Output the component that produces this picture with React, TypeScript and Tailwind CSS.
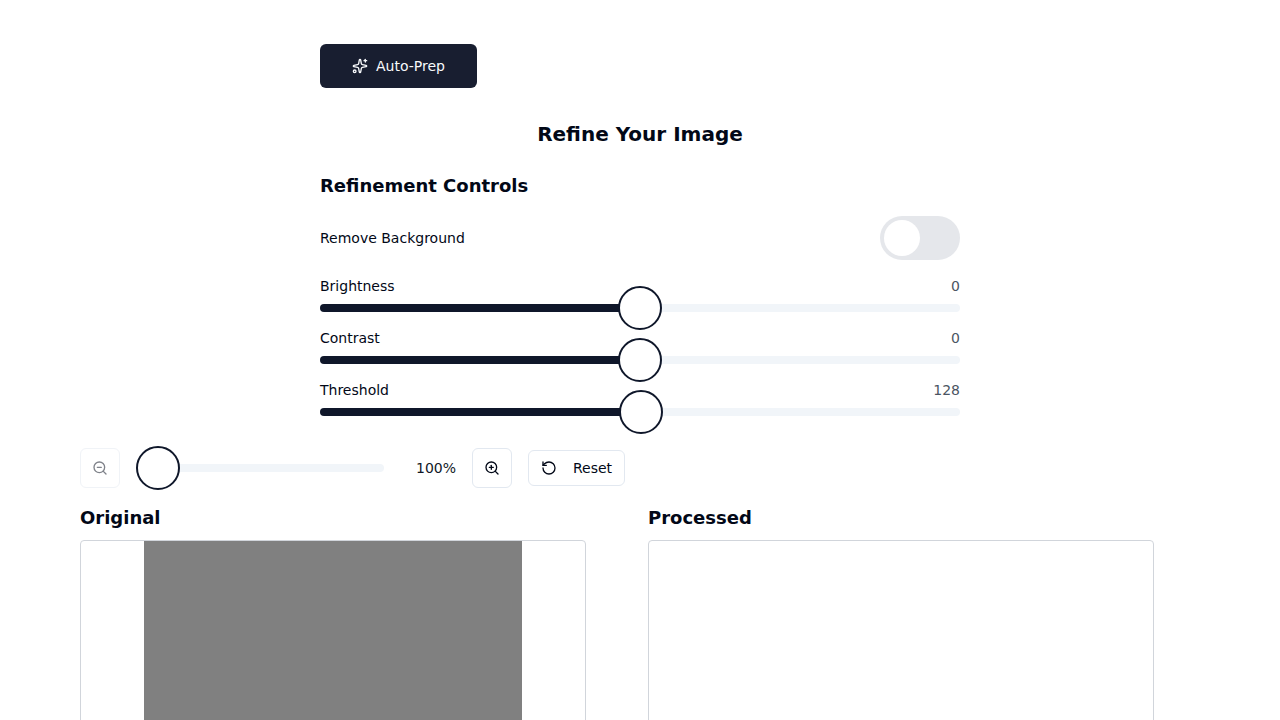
import { RotateCcw, Sparkles, ZoomIn, ZoomOut } from "lucide-react";

function Thumb({ left }: { left: number }) {
  return (
    <span
      className="absolute top-1/2 size-11 -translate-y-1/2 rounded-full border-2 border-[#0f172a] bg-white"
      style={{ left }}
    />
  );
}

function Track({ fill, thumb }: { fill: number; thumb: number }) {
  return (
    <div className="relative w-full">
      <div className="h-2 w-full overflow-hidden rounded-full bg-[#f1f5f9]">
        <div className="h-full bg-[#0f172a]" style={{ width: fill }} />
      </div>
      <Thumb left={thumb} />
    </div>
  );
}

const controls = [
  { label: "Brightness", value: "0", fill: 320, thumb: 298 },
  { label: "Contrast", value: "0", fill: 320, thumb: 298 },
  { label: "Threshold", value: "128", fill: 321.25, thumb: 299.17 },
];

export default function App() {
  return (
    <div className="h-[720px] overflow-hidden bg-white font-['DejaVu_Sans',sans-serif] text-sm text-[#020817]">
      <div className="mx-auto w-[640px] pt-11">
        <button className="flex h-11 items-center gap-2 rounded-md bg-[#181e30] px-8 font-medium text-[#f8fafc]">
          <Sparkles className="size-4" />
          Auto-Prep
        </button>
        <h2 className="mt-8 text-center text-xl font-semibold">Refine Your Image</h2>
        <section className="mt-6">
          <h3 className="text-lg font-semibold">Refinement Controls</h3>
          <div className="mt-4 flex items-center justify-between">
            <span>Remove Background</span>
            <div className="flex h-11 w-20 items-center rounded-full bg-[#e5e7eb] px-1">
              <span className="size-9 rounded-full bg-white" />
            </div>
          </div>
          <div className="mt-4 flex flex-col gap-4">
            {controls.map((c) => (
              <div key={c.label} className="flex flex-col gap-2">
                <div className="flex justify-between">
                  <span>{c.label}</span>
                  <span className="text-[#4b5563]">{c.value}</span>
                </div>
                <Track fill={c.fill} thumb={c.thumb} />
              </div>
            ))}
          </div>
        </section>
      </div>
      <div className="mx-auto mt-8 w-[1120px]">
        <div className="flex h-10 items-center gap-4">
          <button className="flex size-10 items-center justify-center rounded-md border border-[#e2e8f0] opacity-50">
            <ZoomOut className="size-4" />
          </button>
          <div className="w-[248px]">
            <Track fill={0} thumb={0} />
          </div>
          <span className="w-14 text-right text-[#111827]">100%</span>
          <button className="flex size-10 items-center justify-center rounded-md border border-[#e2e8f0]">
            <ZoomIn className="size-4" />
          </button>
          <button className="flex h-9 items-center gap-4 rounded-md border border-[#e2e8f0] px-3">
            <RotateCcw className="size-4" />
            Reset
          </button>
        </div>
        <div className="mt-4 grid grid-cols-2 gap-4">
          <div>
            <h3 className="text-lg font-semibold">Original</h3>
            <div className="mt-2 flex h-[380px] w-[506px] justify-center rounded border border-[#d1d5db]">
              <div className="h-full w-[378px] bg-[#808080]" />
            </div>
          </div>
          <div>
            <h3 className="text-lg font-semibold">Processed</h3>
            <div className="mt-2 h-[380px] w-[506px] rounded border border-[#d1d5db]" />
          </div>
        </div>
      </div>
    </div>
  );
}
